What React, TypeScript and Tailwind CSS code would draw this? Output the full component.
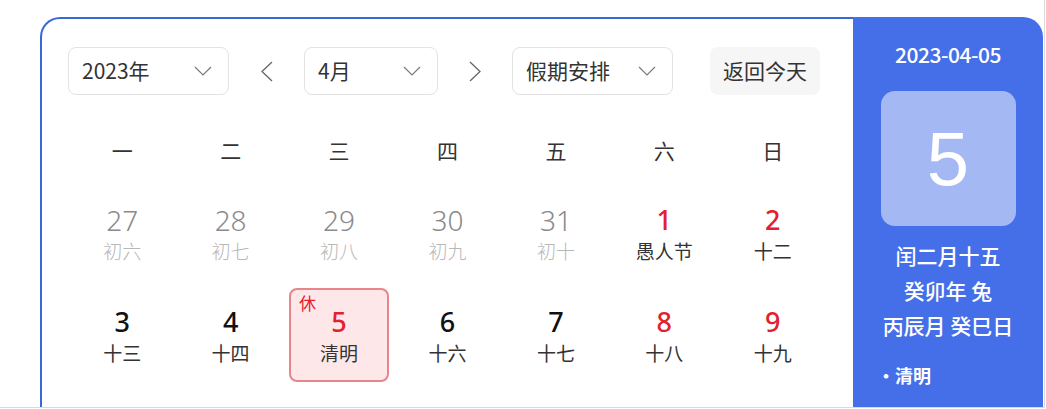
import React from "react";

type Day = {
  num: number;
  lunar: string;
  muted?: boolean;
  red?: boolean;
  rest?: boolean;
  today?: boolean;
};

const weekdays = ["一", "二", "三", "四", "五", "六", "日"];

const rows: Day[][] = [
  [
    { num: 27, lunar: "初六", muted: true },
    { num: 28, lunar: "初七", muted: true },
    { num: 29, lunar: "初八", muted: true },
    { num: 30, lunar: "初九", muted: true },
    { num: 31, lunar: "初十", muted: true },
    { num: 1, lunar: "愚人节", red: true },
    { num: 2, lunar: "十二", red: true },
  ],
  [
    { num: 3, lunar: "十三" },
    { num: 4, lunar: "十四" },
    { num: 5, lunar: "清明", red: true, rest: true, today: true },
    { num: 6, lunar: "十六" },
    { num: 7, lunar: "十七" },
    { num: 8, lunar: "十八", red: true },
    { num: 9, lunar: "十九", red: true },
  ],
];

const font = { fontFamily: '"Noto Sans CJK SC", "Noto Sans", sans-serif' };
const digits = { fontFamily: '"Noto Sans", "Noto Sans CJK SC", sans-serif' };

function Chevron({ dir }: { dir: "down" | "left" | "right" }) {
  if (dir === "down") {
    return (
      <svg width="18" height="10" viewBox="0 0 18 10" fill="none">
        <polyline points="1,1 9,9 17,1" stroke="#7a7a7a" strokeWidth="1.2" />
      </svg>
    );
  }
  return (
    <svg width="12" height="21" viewBox="0 0 12 21" fill="none">
      <polyline
        points={dir === "left" ? "11,1 1,10.5 11,20" : "1,1 11,10.5 1,20"}
        stroke="#666"
        strokeWidth="1.3"
      />
    </svg>
  );
}

function Select({ label, width }: { label: string; width: string }) {
  return (
    <div
      className={`flex h-[48px] ${width} items-center justify-between rounded-[8px] border border-[#e3e3e3] bg-white pl-[13px] pr-[16px] text-[21px] text-[#333]`}
    >
      <span>{label}</span>
      <Chevron dir="down" />
    </div>
  );
}

function DayCell({ d }: { d: Day }) {
  const numColor = d.red ? "text-[#e3202e]" : d.muted ? "text-[#8a8a8a]" : "text-[#111]";
  const lunarColor = d.muted ? "text-[#b8b8b8]" : "text-[#333]";
  return (
    <div className="flex h-[102px] items-center justify-center">
      <div
        className={`relative flex h-[94px] w-[100px] flex-col items-center justify-center rounded-[8px] ${
          d.today ? "border-2 border-[#e7858b] bg-[#fde7e9]" : "border-2 border-transparent"
        }`}
      >
        {d.rest && (
          <span className="absolute left-[8px] top-[4px] text-[17px] leading-none text-[#e3202e]">休</span>
        )}
        <span
          className={`leading-[36px] ${numColor} ${d.muted ? "text-[28px] font-light" : "text-[27px] font-medium"}`}
          style={digits}
        >
          {d.num}
        </span>
        <span className={`text-[19px] leading-[26px] ${lunarColor} ${d.muted ? "font-light" : ""}`}>
          {d.lunar}
        </span>
      </div>
    </div>
  );
}

export default function App() {
  return (
    <div className="h-[409px] w-[1046px] overflow-hidden bg-white" style={font}>
      <div className="h-[408px] w-[1045px] overflow-hidden border-b border-r border-[#dadada] bg-white">
        <div className="ml-[40px] mt-[17px] flex h-[420px] w-[1003px]">
          <div className="w-[813px] rounded-tl-[20px] border-l-2 border-t-2 border-[#3a69d6] pl-[26px] pr-[26px] pt-[28px]">
            <div className="flex items-center">
              <Select label="2023年" width="w-[161px]" />
              <div className="flex w-[75px] justify-center">
                <Chevron dir="left" />
              </div>
              <Select label="4月" width="w-[134px]" />
              <div className="flex w-[74px] justify-center">
                <Chevron dir="right" />
              </div>
              <Select label="假期安排" width="w-[161px]" />
              <div className="ml-[37px] flex h-[48px] w-[110px] items-center justify-center rounded-[8px] bg-[#f6f6f6] text-[21px] text-[#333]">
                返回今天
              </div>
            </div>
            <div className="mt-[25px] grid w-[759px] grid-cols-7">
              {weekdays.map((w) => (
                <div key={w} className="flex h-[62px] items-center justify-center text-[21px] text-[#333]">
                  {w}
                </div>
              ))}
              {rows.flat().map((d, i) => (
                <DayCell key={i} d={d} />
              ))}
            </div>
          </div>
          <div className="flex w-[190px] flex-col items-center rounded-tr-[20px] bg-[#456fe8] pt-[24px] text-white">
            <div className="text-[21px] font-medium leading-[26px] tracking-[-0.5px]">2023-04-05</div>
            <div className="mt-[24px] flex h-[135px] w-[135px] items-center justify-center rounded-[14px] bg-[#a4b9f3]">
              <span className="text-[76px] leading-none" style={{ fontFamily: '"Liberation Sans", Arial, sans-serif' }}>
                5
              </span>
            </div>
            <div className="mt-[12px] text-[21px] font-medium leading-[35px]">闰二月十五</div>
            <div className="text-[21px] font-medium leading-[35px]">癸卯年 兔</div>
            <div className="text-[21px] font-medium leading-[35px]">丙辰月 癸巳日</div>
            <div className="mt-[20px] w-full pl-[24px] text-[18px] font-bold leading-[24px]">·清明</div>
          </div>
        </div>
      </div>
    </div>
  );
}
